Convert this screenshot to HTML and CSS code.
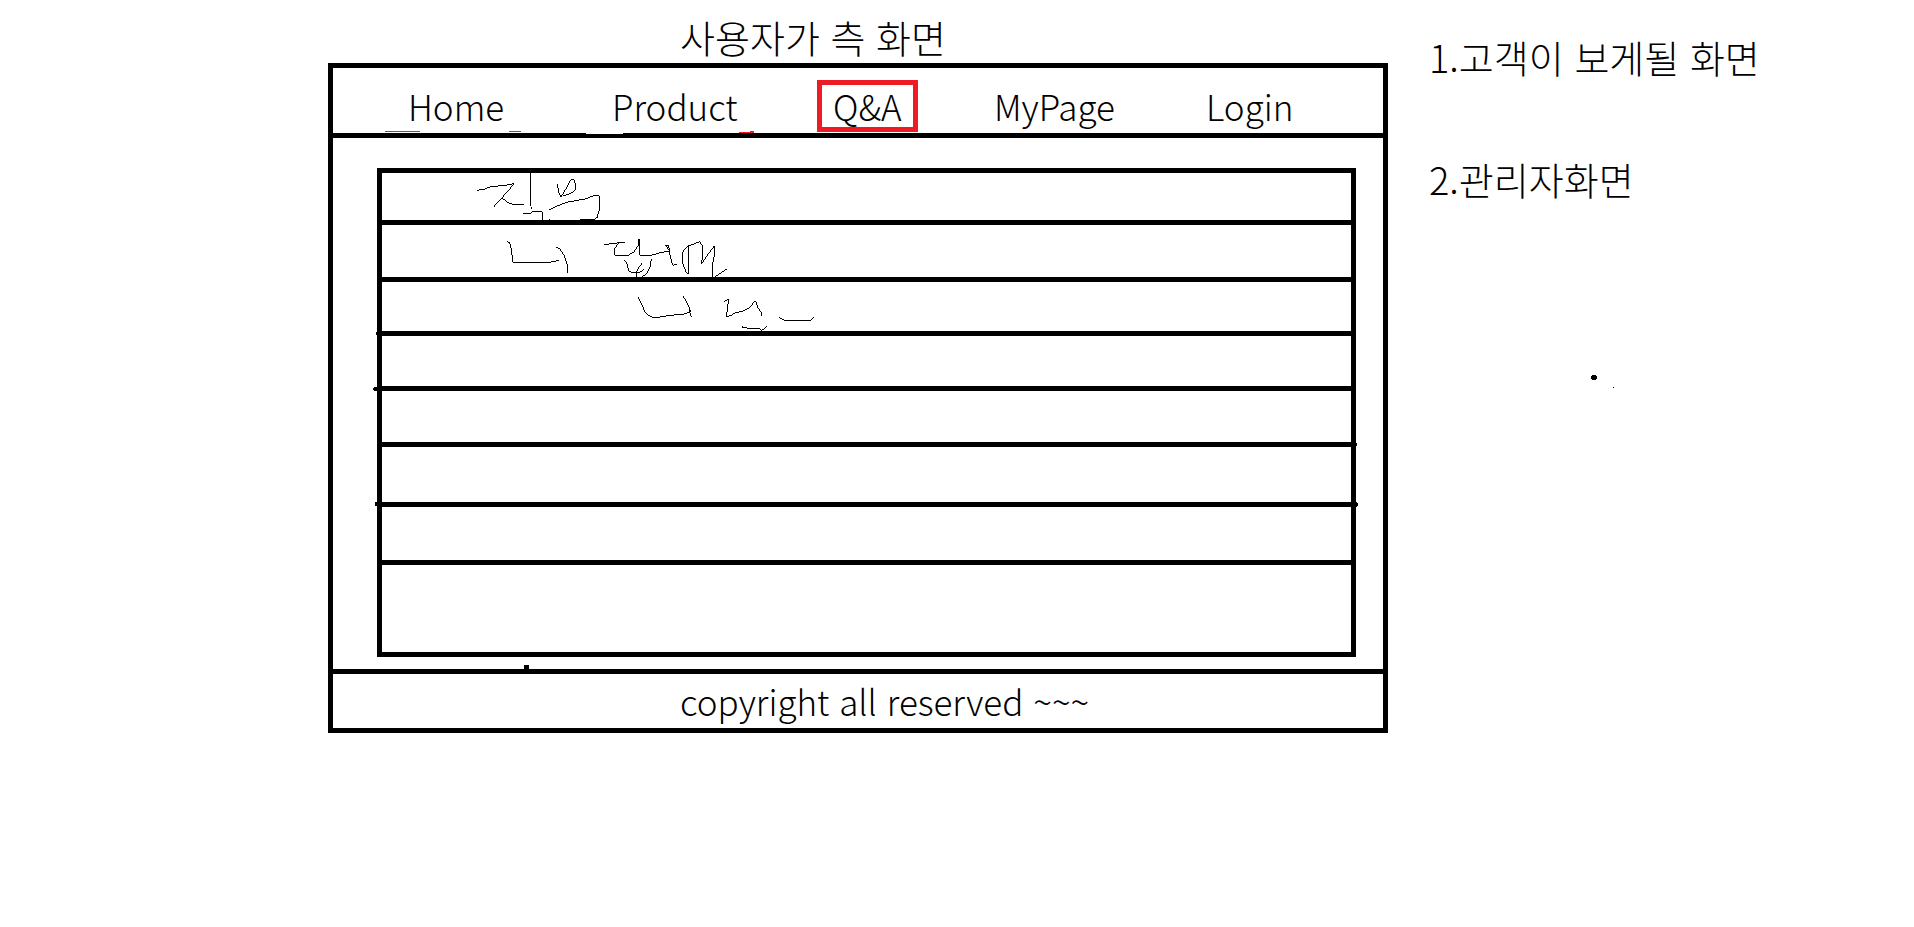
FILE: index.html
```html
<!DOCTYPE html>
<html lang="ko">
<head>
<meta charset="utf-8">
<title>사용자가 측 화면</title>
<link rel="stylesheet" href="styles.css">
</head>
<body>
<div class="page">
  <main class="screen">
    <h1 class="title">사용자가 측 화면</h1>
    <div class="frame">
      <nav class="nav">
        <a class="link" href="#">Home</a>
        <a class="link" href="#">Product</a>
        <a class="link active" href="#">Q&amp;A</a>
        <a class="link" href="#">MyPage</a>
        <a class="link" href="#">Login</a>
        <svg class="marks" width="430" height="8" viewBox="333 130 430 8" shape-rendering="crispEdges" aria-hidden="true">
          <path fill="#ed1c24" d="M385 131h35v1h-35zM509 131h12v1h-12zM739 132h15v1h-15zM750 131h4v1h-4z"/>
          <path fill="#fff" d="M586 133h37v1h-37z"/>
        </svg>
      </nav>
      <section class="content">
        <ul class="board">
          <li></li><li></li><li></li><li></li><li></li><li></li><li></li><li></li>
        </ul>
        <svg class="ink" width="480" height="170" viewBox="377 168 480 170" shape-rendering="crispEdges" aria-hidden="true">
          <g transform="translate(460 160) scale(.33333)">
            <path d="M51 91L75 87L92 80L135 76L161 71L152 84L126 113L100 142M126 113L140 126L157 133H191M211 39V137M214 142V147M189 160L215 159V156H247V180M292 72L296 95L302 112L318 86L332 60L341 58L347 74L345 90L332 101L309 107M268 149L290 138L325 126L375 117L405 106L418 107V150L411 173L400 180H360M267 180H270M537 238H540"/>
          </g>
          <g transform="translate(480 220) scale(.33333)">
            <path d="M82 64L89 69L95 92L98 127H208L236 121M229 82L238 85L252 105L261 130L263 158M372 74L402 70L434 66L418 69L404 84V106H444L462 96L477 72V58L479 106H514L538 99L568 93L557 76L566 77L570 105L578 136L590 133M434 121L442 133L446 152L457 158L480 157L491 148M487 129L473 147L469 158V170M514 118L510 141L500 161L486 171M627 76V161L619 158L609 133L607 98L620 80L646 70L660 65L667 78L669 103L664 132L681 107L703 78V105L698 132V170M706 170L740 147M475 231L481 245L488 258L494 277L514 291L534 292L570 286L610 283L632 274L624 254L610 229M630 264V279L634 292M733 244L746 238L739 290L752 287L762 280L792 272L811 261L823 244L829 245L833 263L844 277V287M784 317L789 323L820 326H841L845 332L862 317M898 292L907 298L914 301H991L1003 292"/>
          </g>
        </svg>
        <svg class="tips" viewBox="0 0 4 484" width="4" height="484" shape-rendering="crispEdges" aria-hidden="true"><path d="M3 164h1v3h-1zM1 219h3v4h-3zM0 220h1v2h-1zM2 334h2v4h-2z"/></svg>
        <svg class="tips right" viewBox="0 0 4 484" width="4" height="484" shape-rendering="crispEdges" aria-hidden="true"><path d="M0 275h1v3h-1zM0 334h1v5h-1zM1 335h1v3h-1z"/></svg>
      </section>
      <footer class="footer">copyright all reserved ~~~</footer>
    </div>
  </main>
  <aside class="notes">
    <p>1.고객이 보게될 화면</p>
    <p>2.관리자화면</p>
    <svg class="dots" width="24" height="13" viewBox="0 0 24 13" shape-rendering="crispEdges" aria-hidden="true"><path d="M1 0h4v1h1v3h-1v1h-4v-1h-1v-3h1zM22 12h1v1h-1z"/></svg>
  </aside>
</div>
</body>
</html>
```
FILE: styles.css
```css
* { box-sizing: border-box; }
body {
  margin: 0;
  background: #fff;
  color: #000;
  font-family: "Noto Sans CJK KR", "Noto Sans", sans-serif;
  font-size: 35px;
  font-weight: 300;
  line-height: 48px;
}
.page {
  display: grid;
  grid-template-columns: 1060fr 526fr;
  padding-left: 17.137%;
}
.title {
  margin: 0;
  padding: 13px 0 2px 352px;
  font-size: 38px;
  font-weight: 300;
}
.frame { border: 5px solid #000; }
.nav {
  position: relative;
  display: grid;
  grid-template-columns: 204fr 205fr 177fr 212fr 177fr;
  padding: 12px 0 1px 75px;
  border-bottom: 5px solid #000;
}
.link {
  justify-self: start;
  padding: 2px 0;
  color: inherit;
  text-decoration: none;
}
.active {
  padding: 0 11px;
  border: 5px solid #ed1c24;
  line-height: 42px;
}
.marks { position: absolute; left: 0; bottom: -5px; }
.content { position: relative; padding: 30px 27px 12px 44px; }
.board {
  display: grid;
  grid-template-rows: 47px 57px 54px 55px 56px 60px 58px 92px;
  margin: 0;
  padding: 0;
  border: 5px solid #000;
  list-style: none;
}
.board li + li { border-top: 5px solid #000; }
.ink { position: absolute; left: 44px; top: 30px; }
.ink path { fill: none; stroke: #000; stroke-width: 3; }
.tips { position: absolute; left: 40px; top: 30px; }
.right { left: auto; right: 23px; }
.footer {
  position: relative;
  padding: 3px 0 3px 347px;
  border-top: 5px solid #000;
}
.footer::before {
  content: "";
  position: absolute;
  left: 191px;
  top: -9px;
  width: 5px;
  height: 4px;
  background: #000;
}
.notes {
  padding: 33px 0 0 41px;
  font-size: 38px;
}
.notes p { margin: 0 0 74px; }
.dots { display: block; margin: 172px 0 0 162px; }
```
